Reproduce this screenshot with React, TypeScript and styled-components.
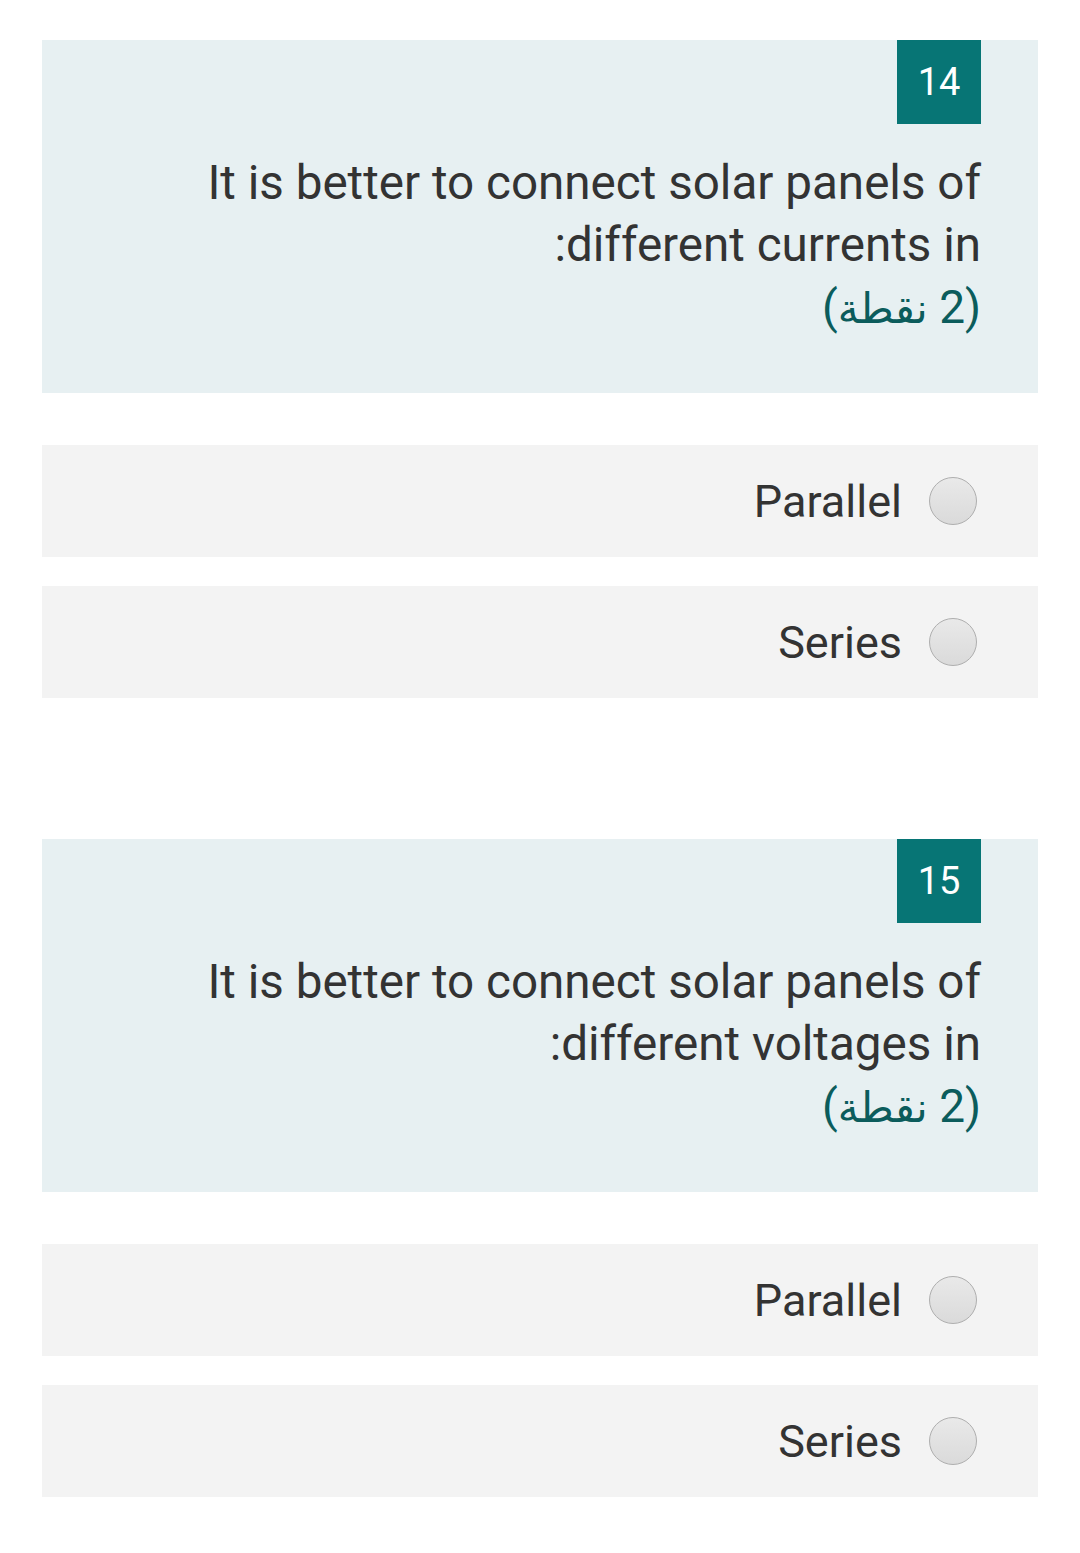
import React from "react";
import styled, { createGlobalStyle } from "styled-components";

const GlobalStyle = createGlobalStyle`
  html, body {
    margin: 0;
    padding: 0;
    background: #fff;
  }
  body {
    font-family: Roboto, "Noto Sans", Arial, sans-serif;
  }
`;

const Page = styled.div`
  width: 996px;
  padding: 40px 42px 56px;
  display: flex;
  flex-direction: column;
`;

const QuestionBlock = styled.section`
  display: flex;
  flex-direction: column;
  margin-bottom: 141px;

  &:last-child {
    margin-bottom: 0;
  }
`;

const QuestionCard = styled.div`
  background-color: #e7f0f2;
  padding: 0 57px 55px 57px;
  display: flex;
  flex-direction: column;
  align-items: flex-end;
`;

const NumberBadge = styled.div`
  width: 84px;
  height: 84px;
  background-color: #077575;
  color: #fff;
  font-size: 38px;
  display: flex;
  align-items: center;
  justify-content: center;
  margin-bottom: 28px;
`;

const QuestionText = styled.div`
  direction: rtl;
  text-align: right;
  font-size: 47.6px;
  line-height: 62px;
  color: #333;
  width: 100%;
`;

const Points = styled.div`
  direction: rtl;
  font-size: 46px;
  height: 62px;
  line-height: 62px;
  color: #0b5c5c;
  font-family: Roboto, "DejaVu Sans", sans-serif;

  & > span {
    font-size: 42px;
  }
`;

const OptionList = styled.div`
  display: flex;
  flex-direction: column;
  gap: 29px;
  margin-top: 52px;
`;

const OptionRow = styled.label`
  background-color: #f3f3f3;
  height: 112px;
  display: flex;
  flex-direction: row-reverse;
  align-items: center;
  padding: 0 61px 0 0;
  gap: 27px;
  font-size: 45px;
  color: #333;
  cursor: pointer;
`;

const Radio = styled.span`
  width: 48px;
  height: 48px;
  border-radius: 50%;
  box-sizing: border-box;
  border: 1.5px solid #aeaeae;
  background: linear-gradient(#e9e9e9, #dadada);
  flex-shrink: 0;
`;

type Question = {
  number: number;
  text: string;
  options: string[];
};

const questions: Question[] = [
  {
    number: 14,
    text: "It is better to connect solar panels of different currents in:",
    options: ["Parallel", "Series"],
  },
  {
    number: 15,
    text: "It is better to connect solar panels of different voltages in:",
    options: ["Parallel", "Series"],
  },
];

const App = () => {
  return (
    <>
      <GlobalStyle />
      <Page>
        {questions.map((q) => (
          <QuestionBlock key={q.number}>
            <QuestionCard>
              <NumberBadge>{q.number}</NumberBadge>
              <QuestionText>{q.text}</QuestionText>
              <Points>
                (2 <span>نقطة</span>)
              </Points>
            </QuestionCard>
            <OptionList>
              {q.options.map((opt) => (
                <OptionRow key={opt}>
                  <Radio />
                  <span>{opt}</span>
                </OptionRow>
              ))}
            </OptionList>
          </QuestionBlock>
        ))}
      </Page>
    </>
  );
};

export default App;
